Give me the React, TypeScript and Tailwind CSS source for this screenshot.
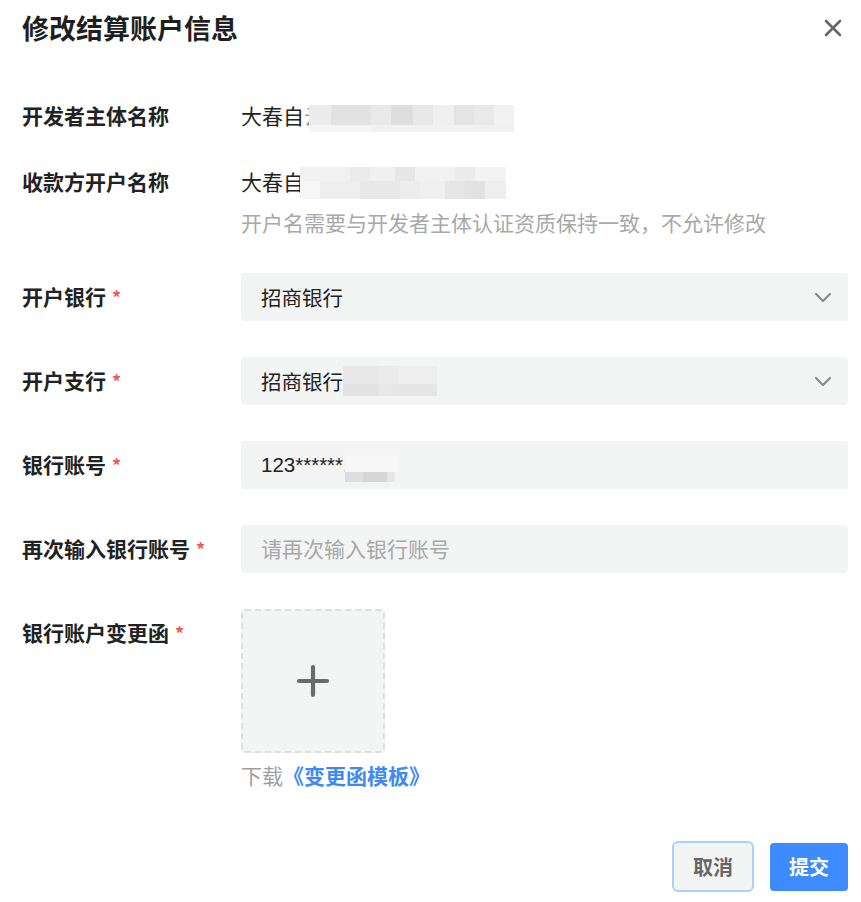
import React from "react";

const font = { fontFamily: '"Noto Sans CJK SC", "Noto Sans", sans-serif' };

function Mosaic({ cells }: { cells: { w: number; h: number; c: string; mt?: number }[][] }) {
  return (
    <span className="inline-flex flex-col align-middle">
      {cells.map((row, i) => (
        <span key={i} className="flex">
          {row.map((cell, j) => (
            <span
              key={j}
              className="block"
              style={{ width: cell.w, height: cell.h, background: cell.c, marginTop: cell.mt ?? 0 }}
            />
          ))}
        </span>
      ))}
    </span>
  );
}

function Label({ text, required }: { text: string; required?: boolean }) {
  return (
    <div className="w-[219px] shrink-0 h-[48px] flex items-center text-[21px] font-bold text-[#222222]">
      <span>{text}</span>
      {required && <span className="ml-[6px] text-[18px] text-[#f0595b] font-bold">*</span>}
    </div>
  );
}

function Chevron() {
  return (
    <svg width="18" height="11" viewBox="0 0 18 11" className="shrink-0">
      <path d="M2 2 L9 9 L16 2" fill="none" stroke="#8a8a8a" strokeWidth="2.2" strokeLinecap="round" strokeLinejoin="round" />
    </svg>
  );
}

export default function App() {
  return (
    <div className="w-[861px] h-[902px] bg-white pl-[22px] pr-[13px] overflow-hidden" style={font}>
      {/* header */}
      <div className="h-[56px] flex items-center justify-between">
        <div className="text-[27px] font-bold text-[#1f1f1f]">修改结算账户信息</div>
        <svg width="20" height="20" viewBox="0 0 20 20" className="mr-[5px]">
          <path d="M3 3 L17 17 M17 3 L3 17" stroke="#666666" strokeWidth="2.6" strokeLinecap="round" />
        </svg>
      </div>

      {/* row 1 */}
      <div className="mt-[36px] flex">
        <Label text="开发者主体名称" />
        <div className="h-[48px] flex items-center text-[21px] text-[#222222]">
          <span>大春自</span>
          <span className="text-[#999]">云</span>
          <span className="-ml-[16px]">
            <Mosaic
              cells={[
                [
                  { w: 22, h: 20, c: "#ececec" },
                  { w: 40, h: 20, c: "#e2e2e2" },
                  { w: 20, h: 20, c: "#e9e9e9" },
                  { w: 22, h: 20, c: "#dedede" },
                  { w: 20, h: 20, c: "#e8e8e8" },
                  { w: 21, h: 20, c: "#f0f0f0" },
                  { w: 20, h: 20, c: "#e4e4e4" },
                  { w: 20, h: 20, c: "#e9e9e9" },
                  { w: 20, h: 20, c: "#f2f2f2" },
                ],
                [
                  { w: 62, h: 7, c: "#f4f4f4" },
                  { w: 143, h: 7, c: "#f1f1f1" },
                ],
              ]}
            />
          </span>
        </div>
      </div>

      {/* row 2 */}
      <div className="mt-[18px] flex">
        <Label text="收款方开户名称" />
        <div className="flex flex-col">
          <div className="h-[48px] flex items-center text-[21px] text-[#222222]">
            <span>大春自</span>
            <span className="-ml-[4px]">
              <Mosaic
                cells={[
                  [
                    { w: 50, h: 14, c: "#f1f1f1" },
                    { w: 20, h: 14, c: "#ebebeb" },
                    { w: 25, h: 14, c: "#f0f0f0" },
                    { w: 20, h: 14, c: "#e6e6e6" },
                    { w: 40, h: 14, c: "#f2f2f2" },
                    { w: 20, h: 14, c: "#ececec" },
                    { w: 31, h: 14, c: "#f3f3f3" },
                  ],
                  [
                    { w: 20, h: 18, c: "#f6f6f6" },
                    { w: 40, h: 18, c: "#eeeeee" },
                    { w: 40, h: 18, c: "#e8e8e8" },
                    { w: 20, h: 18, c: "#ededed" },
                    { w: 25, h: 18, c: "#f0f0f0" },
                    { w: 20, h: 18, c: "#e6e6e6" },
                    { w: 20, h: 18, c: "#e2e2e2" },
                    { w: 21, h: 18, c: "#eeeeee" },
                  ],
                ]}
              />
            </span>
          </div>
          <div className="mt-[2px] h-[30px] flex items-center text-[21px] text-[#a8a8a8] whitespace-nowrap">
            开户名需要与开发者主体认证资质保持一致，不允许修改
          </div>
        </div>
      </div>

      {/* row 3 */}
      <div className="mt-[35px] flex">
        <Label text="开户银行" required />
        <div className="flex-1 h-[48px] rounded-[4px] bg-[#f3f4f4] flex items-center justify-between pl-[20px] pr-[16px] text-[20.5px] text-[#222222]">
          <span>招商银行</span>
          <Chevron />
        </div>
      </div>

      {/* row 4 */}
      <div className="mt-[36px] flex">
        <Label text="开户支行" required />
        <div className="flex-1 h-[48px] rounded-[4px] bg-[#f3f4f4] flex items-center justify-between pl-[20px] pr-[16px] text-[20.5px] text-[#222222]">
          <span className="flex items-center">
            <span>招商银行</span>
            <Mosaic
              cells={[
                [
                  { w: 36, h: 18, c: "#e8e8e8" },
                  { w: 20, h: 18, c: "#ebebeb" },
                  { w: 38, h: 18, c: "#eeeeee" },
                ],
                [
                  { w: 36, h: 12, c: "#e2e2e2" },
                  { w: 20, h: 12, c: "#e8e8e8" },
                  { w: 38, h: 12, c: "#e5e5e5" },
                ],
              ]}
            />
          </span>
          <Chevron />
        </div>
      </div>

      {/* row 5 */}
      <div className="mt-[36px] flex">
        <Label text="银行账号" required />
        <div className="flex-1 h-[48px] rounded-[4px] bg-[#f3f4f4] flex items-center pl-[20px] text-[20.5px] text-[#222222]">
          <span style={{ fontFamily: '"Liberation Sans", "Noto Sans CJK SC", sans-serif' }}>123******</span>
          <span className="text-[#555]" style={{ fontFamily: '"Liberation Sans", sans-serif' }}>,</span>
          <span className="-ml-[4px]">
            <Mosaic
              cells={[
                [{ w: 54, h: 20, c: "#f6f6f6" }],
                [
                  { w: 18, h: 10, c: "#dedede" },
                  { w: 24, h: 10, c: "#d6d6d6" },
                  { w: 8, h: 10, c: "#e6e6e6" },
                ],
              ]}
            />
          </span>
        </div>
      </div>

      {/* row 6 */}
      <div className="mt-[36px] flex">
        <Label text="再次输入银行账号" required />
        <div className="flex-1 h-[48px] rounded-[4px] bg-[#f3f4f4] flex items-center pl-[20px] text-[21px] text-[#a8a8a8]">
          请再次输入银行账号
        </div>
      </div>

      {/* row 7 */}
      <div className="mt-[36px] flex">
        <Label text="银行账户变更函" required />
        <div className="flex flex-col">
          <div className="w-[144px] h-[144px] rounded-[4px] bg-[#f3f4f4] border-2 border-dashed border-[#dedfdf] flex items-center justify-center">
            <svg width="34" height="34" viewBox="0 0 34 34">
              <path d="M17 3 V31 M3 17 H31" stroke="#6b6b6b" strokeWidth="4.2" strokeLinecap="round" />
            </svg>
          </div>
          <div className="mt-[8px] h-[30px] flex items-center text-[21px] whitespace-nowrap">
            <span className="text-[#a0a0a0]">下载</span>
            <span className="font-bold text-[#3d8af7]">《变更函模板》</span>
          </div>
        </div>
      </div>

      {/* buttons */}
      <div className="mt-[50px] flex justify-end items-center gap-[16px]">
        <button className="w-[82px] h-[51px] rounded-[6px] border-2 border-[#a9d0ff] bg-[#f3f4f4] text-[20px] font-bold text-[#666666]">
          取消
        </button>
        <button className="w-[78px] h-[48px] rounded-[4px] bg-[#3e8bff] text-[20px] font-bold text-white">
          提交
        </button>
      </div>
    </div>
  );
}
